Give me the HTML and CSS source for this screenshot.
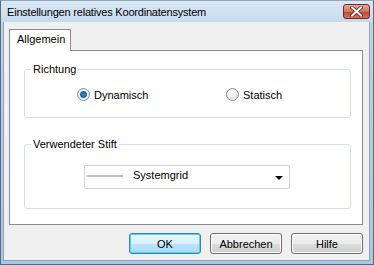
FILE: index.html
```html
<!DOCTYPE html>
<html lang="de">
<head>
  <meta charset="UTF-8" />
  <title>Einstellungen relatives Koordinatensystem</title>
  <link rel="stylesheet" href="styles.css">
</head>
<body>
  <div class="window">
    <div class="titlebar">
      <div class="title">Einstellungen relatives Koordinatensystem</div>
      <div class="close-btn">
        <svg width="13" height="11" viewBox="0 0 13 11"><path d="M2 1.5 L11 9.5 M11 1.5 L2 9.5" stroke="#6b1e14" stroke-width="3.6" stroke-linecap="square"/><path d="M2 1.5 L11 9.5 M11 1.5 L2 9.5" stroke="#fff" stroke-width="2" stroke-linecap="square"/></svg>
      </div>
    </div>

    <div class="client">
      <div class="tabs">
        <div class="tab active">Allgemein</div>
      </div>

      <div class="tab-panel">
        <!-- Richtung -->
        <fieldset class="group group-direction">
          <legend>Richtung</legend>
          <div class="radio-row">
            <label class="radio"><span class="radio-dot checked"></span>Dynamisch</label>
            <label class="radio"><span class="radio-dot"></span>Statisch</label>
          </div>
        </fieldset>

        <!-- Stift -->
        <fieldset class="group group-pen">
          <legend>Verwendeter Stift</legend>
          <div class="combo">
            <span class="pen-sample"></span>
            <span class="combo-text">Systemgrid</span>
            <span class="combo-arrow"></span>
          </div>
        </fieldset>
      </div>

      <div class="button-bar">
        <button class="dlg-btn default">OK</button>
        <button class="dlg-btn">Abbrechen</button>
        <button class="dlg-btn">Hilfe</button>
      </div>
    </div>
  </div>
</body>
</html>
```

FILE: styles.css
```css
body {
  margin: 0;
  padding: 0;
  background: #f0f0f0;
  font-family: 'Liberation Sans', Arial, sans-serif;
  font-size: 11px;
  color: #000;
}

.window {
  width: 374px;
  height: 265px;
  box-sizing: border-box;
  display: flex;
  flex-direction: column;
  border: 1px solid #5c6b78;
  border-top-color: #8fa5bb;
  background: linear-gradient(#bcd3ea, #a9c6e4);
}

.titlebar {
  height: 21px;
  display: flex;
  align-items: center;
  justify-content: space-between;
  padding: 0 3px 0 6px;
  background: linear-gradient(#dbe8f5, #c6daee);
}

.title {
  font-size: 11px;
  letter-spacing: -0.2px;
  color: #000;
}

.close-btn {
  width: 27px;
  height: 15px;
  box-sizing: border-box;
  border: 1px solid #6b2a22;
  border-radius: 3px;
  background: linear-gradient(#e8a89a, #d2735f 50%, #c2442e 51%, #d5735b);
  display: flex;
  align-items: center;
  justify-content: center;
}

.client {
  flex: 1;
  margin: 0 3px 3px 2px;
  border: 1px solid #8ca4bc;
  border-top: none;
  background: #f0f0f0;
  padding: 7px 6px 0 5px;
  display: flex;
  flex-direction: column;
}

.tabs {
  display: flex;
  height: 21px;
  position: relative;
  z-index: 1;
}

.tab {
  padding: 3px 7px 0 7px;
  width: 46px;
  border: 1px solid #898c95;
  border-bottom: none;
  background: #fff;
  height: 18px;
  margin-bottom: -1px;
  font-size: 11px;
}

.tab-panel {
  height: 175px;
  background: #fff;
  border: 1px solid #898c95;
  padding: 12px 11px 0 14px;
  box-sizing: border-box;
}

.group {
  border: 1px solid #d5dfe5;
  border-radius: 3px;
  margin: 0;
  padding: 0;
  min-width: 0;
}

.group legend {
  font-size: 11px;
  padding: 0 2px;
  margin-left: 6px;
}

.group-direction {
  height: 53px;
}

.radio-row {
  display: flex;
  padding: 13px 0 0 52px;
}

.radio {
  display: flex;
  align-items: center;
  font-size: 11px;
  flex: none;
  width: 149px;
}

.radio + .radio {
  width: auto;
}

.radio-dot {
  width: 11px;
  height: 11px;
  border-radius: 50%;
  border: 1px solid #8c8f93;
  background: radial-gradient(circle at 40% 35%, #ffffff, #d8d8d8);
  margin-right: 4px;
  box-sizing: content-box;
}

.radio-dot.checked {
  background: radial-gradient(circle, #2d8fd0 0, #1566a8 3px, #eef2f6 4px, #e0e3e8 6px);
}

.group-pen {
  margin-top: 20px;
  height: 69px;
}

.combo {
  margin: 15px 0 0 59px;
  width: 206px;
  height: 24px;
  box-sizing: border-box;
  border: 1px solid #d2d2d2;
  border-radius: 2px;
  display: flex;
  align-items: center;
  padding: 0 6px 0 2px;
  font-size: 11px;
}

.pen-sample {
  width: 36px;
  height: 1px;
  border-top: 2px solid #c0c0c0;
  margin-top: -2px;
}

.combo-text {
  flex: 1;
  margin-left: 10px;
  margin-top: -4px;
}

.combo-arrow {
  width: 0;
  height: 0;
  border-left: 4px solid transparent;
  border-right: 4px solid transparent;
  border-top: 4px solid #000;
  margin-top: 2px;
}

.button-bar {
  display: flex;
  justify-content: flex-end;
  gap: 9px;
  padding: 8px 0 0 0;
}

.dlg-btn {
  width: 72px;
  height: 21px;
  font-family: 'Liberation Sans', Arial, sans-serif;
  font-size: 11px;
  color: #000;
  border: 1px solid #707070;
  border-radius: 3px;
  background: linear-gradient(#f2f2f2 0, #ebebeb 50%, #dddddd 51%, #cfcfcf 100%);
  box-shadow: inset 0 0 0 1px #fcfcfc;
  padding: 0;
}

.dlg-btn.default {
  border-color: #3c7fb1;
  box-shadow: inset 0 0 0 1px #48d4fd;
  background: linear-gradient(#eaf6fd 0, #d9f0fc 50%, #bee6fd 51%, #a7d9f5 100%);
}
```
